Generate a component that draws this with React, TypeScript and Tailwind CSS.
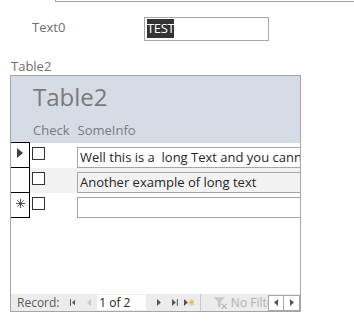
import React from "react";

const font = { fontFamily: '"Open Sans", "Noto Sans", sans-serif' };

function Row({ sel, text, alt }: { sel: "cur" | "none" | "new"; text: string; alt?: boolean }) {
  return (
    <div className={`flex h-[25px] ${alt ? "bg-[#f2f2f2]" : "bg-white"}`}>
      <div className="w-[20px] h-[26px] -mt-px border border-black bg-white flex items-start justify-center pt-[4px] shrink-0">
        {sel === "cur" && (
          <svg width="6" height="10" viewBox="0 0 6 10" className="mt-[1px]">
            <path d="M0 0 L6 5 L0 10 Z" fill="#404040" />
          </svg>
        )}
        {sel === "new" && (
          <svg width="9" height="9" viewBox="0 0 9 9" className="mt-[2px]">
            <path d="M4.5 0 V9 M0 4.5 H9 M1.3 1.3 L7.7 7.7 M7.7 1.3 L1.3 7.7" stroke="#555" strokeWidth="1" />
          </svg>
        )}
      </div>
      <div className="ml-[2px] mt-[4px] w-[13px] h-[13px] border border-[#333] bg-white shrink-0" />
      <div
        className={`ml-[32px] mt-[4px] h-[21px] flex-1 border border-[#a6a6a6] border-r-0 ${alt ? "bg-[#f2f2f2]" : "bg-white"} overflow-hidden whitespace-pre text-[13px] leading-[19px] text-[#262626] pl-[2px]`}
      >
        {text}
      </div>
    </div>
  );
}

export default function App() {
  return (
    <div className="w-[354px] h-[334px] bg-white overflow-hidden" style={font}>
      <div className="ml-[55px] h-[2px] border-l border-b border-[#a0a0a0]" />
      <div className="flex mt-[15px] h-[24px]">
        <div className="ml-[32px] w-[112px] text-[13px] leading-[20px] text-[#6e6e6e]">Text0</div>
        <div className="w-[125px] h-[24px] border border-[#a6a6a6] pl-[2px] pt-[1px] flex items-start">
          <div className="bg-[#333333] text-white text-[13px] leading-[19px] tracking-[-0.3px]">TEST</div>
        </div>
      </div>
      <div className="ml-[11px] mt-[18px] text-[13px] leading-[15px] text-[#6e6e6e]">Table2</div>
      <div className="ml-[10px] mt-[1px] w-[291px] h-[237px] border border-[#a6a6a6] flex flex-col overflow-hidden">
        <div className="h-[67px] bg-[#d6dce5] shrink-0 flex flex-col">
          <div className="ml-[22px] mt-[6px] text-[24px] leading-[30px] text-[#7a7a7a]">Table2</div>
          <div className="flex mt-[10px] text-[13px] leading-[16px] text-[#7a7a7a]">
            <span className="ml-[22px]">Check</span>
            <span className="ml-[8px]">SomeInfo</span>
          </div>
        </div>
        <div className="-ml-px flex flex-col">
          <Row sel="cur" text="Well this is a  long Text and you cannot see it all" />
          <Row sel="none" text="Another example of long text" alt />
          <Row sel="new" text="" />
        </div>
        <div className="flex-1" />
        <div className="h-[17px] bg-[#ececec] flex items-center text-[12px] text-[#595959] shrink-0">
          <span className="ml-[6px]">Record:</span>
          <svg width="6" height="7" viewBox="0 0 6 7" className="ml-[10px]">
            <rect x="0" y="0" width="1" height="7" fill="#555" />
            <path d="M6 0 L2 3.5 L6 7 Z" fill="#555" />
          </svg>
          <svg width="4" height="7" viewBox="0 0 4 7" className="ml-[12px]">
            <path d="M4 0 L0 3.5 L4 7 Z" fill="#c8c8c8" />
          </svg>
          <div className="ml-[6px] w-[50px] h-[15px] bg-white text-[#262626] text-[12px] leading-[15px] pl-[2px]">1 of 2</div>
          <svg width="4" height="7" viewBox="0 0 4 7" className="ml-[11px]">
            <path d="M0 0 L4 3.5 L0 7 Z" fill="#555" />
          </svg>
          <svg width="6" height="7" viewBox="0 0 6 7" className="ml-[11px]">
            <path d="M0 0 L4 3.5 L0 7 Z" fill="#555" />
            <rect x="5" y="0" width="1" height="7" fill="#555" />
          </svg>
          <svg width="11" height="9" viewBox="0 0 11 9" className="ml-[6px]">
            <path d="M0 1 L4 4.5 L0 8 Z" fill="#555" />
            <path d="M8 1 V8 M4.5 4.5 H11.5 M5.5 2 L10.5 7 M10.5 2 L5.5 7" stroke="#e8b64c" strokeWidth="1" />
          </svg>
          <div className="ml-[6px] w-px h-[17px] bg-[#c8c8c8]" />
          <svg width="15" height="13" viewBox="0 0 15 13" className="ml-[12px]">
            <path d="M1 1 H12 L8 6 V11 L5 12 V6 Z" fill="#c9c9c9" />
            <path d="M9 8 L14 13 M14 8 L9 13" stroke="#b5b5b5" strokeWidth="1.2" />
          </svg>
          <span className="ml-[3px] w-[38px] overflow-hidden whitespace-nowrap text-[#b0b0b0]">No Filter</span>
          <div className="w-[17px] h-[16px] border border-[#a6a6a6] bg-white flex items-center justify-center">
            <svg width="4" height="7" viewBox="0 0 4 7">
              <path d="M4 0 L0 3.5 L4 7 Z" fill="#555" />
            </svg>
          </div>
          <div className="w-[16px] h-[16px] border border-l-0 border-[#a6a6a6] bg-white flex items-center justify-center">
            <svg width="4" height="7" viewBox="0 0 4 7">
              <path d="M0 0 L4 3.5 L0 7 Z" fill="#555" />
            </svg>
          </div>
        </div>
      </div>
    </div>
  );
}
